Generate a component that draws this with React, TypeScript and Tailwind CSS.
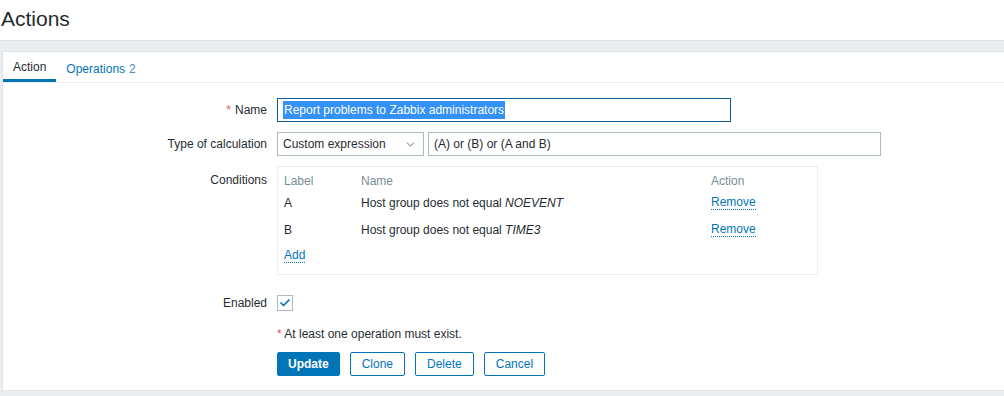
import { Check, ChevronDown } from 'lucide-react';

const font = { fontFamily: '"Liberation Sans", Arial, sans-serif' };

function LinkText({ children }: { children: React.ReactNode }) {
  return (
    <span className="text-[#0275b8] border-b border-dotted border-[#0275b8] leading-[13px] cursor-pointer">
      {children}
    </span>
  );
}

function FormRow({ label, required, top, children }: { label?: string; required?: boolean; top?: boolean; children: React.ReactNode }) {
  return (
    <div className={`flex ${top ? 'items-start' : 'items-center'}`}>
      <div className={`w-[264px] shrink-0 text-right ${top ? 'pt-[5px]' : ''}`}>
        {required && <span className="text-[#e45959] mr-[4px]">*</span>}
        {label}
      </div>
      <div className="ml-[10px] flex-1">{children}</div>
    </div>
  );
}

function Btn({ primary, children }: { primary?: boolean; children: React.ReactNode }) {
  return (
    <button
      className={
        primary
          ? 'h-[24px] px-[10px] rounded-[2px] bg-[#0275b8] text-white border border-[#0275b8] font-bold'
          : 'h-[24px] px-[11px] rounded-[2px] bg-white text-[#0275b8] border border-[#0275b8]'
      }
    >
      {children}
    </button>
  );
}

export default function App() {
  return (
    <div className="w-[1004px] h-[396px] bg-[#ebeef0] text-[12px] text-[#1f2c33] overflow-hidden" style={font}>
      <header className="h-[41px] bg-white border-b border-[#dfe4e7] flex items-center pl-[1px]">
        <h1 className="text-[21px] leading-none font-normal text-[#1f2c33] -mt-[3px]">Actions</h1>
      </header>

      <div className="pt-[10px] pl-[2px]">
        <div className="bg-white border border-[#dfe4e7] border-r-0 h-[340px]">
          <div className="flex h-[31px] border-b border-[#ebeef0]">
            <div className="h-full px-[10px] flex items-center border-b-[3px] border-[#0275b8] pt-[3px]">Action</div>
            <div className="h-full px-[10px] flex items-center pt-[3px] text-[#0275b8]">
              Operations <span className="ml-[4px] text-[#4f8cb8]">2</span>
            </div>
          </div>

          <div className="flex flex-col pt-[15px]">
            <FormRow label="Name" required>
              <div className="w-[454px] h-[24px] border border-[#0b5f94] flex items-center px-[5px]">
                <span className="bg-[#3391f8] text-white leading-[18px] px-[1px]">Report problems to Zabbix administrators</span>
              </div>
            </FormRow>

            <div className="h-[10px]" />
            <FormRow label="Type of calculation">
              <div className="flex gap-[4px]">
                <div className="w-[147px] h-[24px] border border-[#acbbc2] flex items-center justify-between pl-[5px] pr-[6px]">
                  <span>Custom expression</span>
                  <ChevronDown size={13} strokeWidth={1.6} className="text-[#4f5b62]" />
                </div>
                <div className="w-[453px] h-[24px] border border-[#acbbc2] flex items-center px-[5px]">
                  (A) or (B) or (A and B)
                </div>
              </div>
            </FormRow>

            <div className="h-[10px]" />
            <FormRow label="Conditions" top>
              <div className="w-[541px] h-[109px] border border-[#ebeef0] px-[6px] pt-[5px]">
                <div className="grid grid-cols-[77px_350px_1fr]">
                  <div className="h-[18px] flex items-center text-[#768d99]">Label</div>
                  <div className="h-[18px] flex items-center text-[#768d99]">Name</div>
                  <div className="h-[18px] flex items-center text-[#768d99]">Action</div>

                  <div className="h-[26px] flex items-center">A</div>
                  <div className="h-[26px] flex items-center">
                    Host group does not equal&nbsp;<i>NOEVENT</i>
                  </div>
                  <div className="h-[26px] flex items-center"><LinkText>Remove</LinkText></div>

                  <div className="h-[27px] flex items-center">B</div>
                  <div className="h-[27px] flex items-center">
                    Host group does not equal&nbsp;<i>TIME3</i>
                  </div>
                  <div className="h-[27px] flex items-center"><LinkText>Remove</LinkText></div>

                  <div className="h-[25px] flex items-center"><LinkText>Add</LinkText></div>
                </div>
              </div>
            </FormRow>

            <div className="h-[19px]" />
            <FormRow label="Enabled">
              <div className="w-[16px] h-[16px] border border-[#acbbc2] flex items-center justify-center">
                <Check size={12} strokeWidth={3.5} className="text-[#0275b8]" />
              </div>
            </FormRow>

            <div className="h-[15px]" />
            <div className="pl-[274px] leading-[14px]">
              <span className="text-[#e45959]">*</span> At least one operation must exist.
            </div>

            <div className="h-[11px]" />
            <div className="pl-[274px] flex gap-[10px]">
              <Btn primary>Update</Btn>
              <Btn>Clone</Btn>
              <Btn>Delete</Btn>
              <Btn>Cancel</Btn>
            </div>
          </div>
        </div>
      </div>
    </div>
  );
}
